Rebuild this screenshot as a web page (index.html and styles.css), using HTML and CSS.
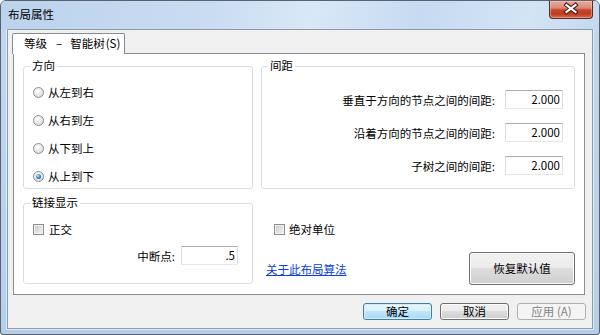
FILE: index.html
```html
<!DOCTYPE html>
<html lang="zh-CN">
<head>
<meta charset="utf-8">
<title>布局属性</title>
<link rel="stylesheet" href="styles.css">
</head>
<body>
<div class="window">
  <div class="titlebar">
    <span class="title">布局属性</span>
    <div class="close">
      <svg width="44" height="18" viewBox="0 0 44 18">
        <path d="M18.5 5 L27.5 12 M27.5 5 L18.5 12" stroke="#4a1d15" stroke-width="4.2" stroke-linecap="square" fill="none"/>
        <path d="M18.5 5 L27.5 12 M27.5 5 L18.5 12" stroke="#ffffff" stroke-width="2.2" stroke-linecap="square" fill="none"/>
      </svg>
    </div>
  </div>
  <div class="client">
    <div class="tabstrip">
      <div class="tab">等级<span class="dash">–</span>智能树<span class="acc">(S)</span></div>
    </div>
    <div class="panel">
      <div class="row">
        <div class="group g1">
          <span class="legend">方向</span>
          <div class="opt"><span class="radio"></span><span>从左到右</span></div>
          <div class="opt"><span class="radio"></span><span>从右到左</span></div>
          <div class="opt"><span class="radio"></span><span>从下到上</span></div>
          <div class="opt"><span class="radio on"></span><span>从上到下</span></div>
        </div>
        <div class="group g2">
          <span class="legend">间距</span>
          <div class="field"><span class="lbl">垂直于方向的节点之间的间距:</span><span class="input">2.000</span></div>
          <div class="field"><span class="lbl">沿着方向的节点之间的间距:</span><span class="input">2.000</span></div>
          <div class="field"><span class="lbl">子树之间的间距:</span><span class="input">2.000</span></div>
        </div>
      </div>
      <div class="row">
        <div class="group g3">
          <span class="legend">链接显示</span>
          <div class="check-row"><span class="checkbox"></span><span>正交</span></div>
          <div class="field mid"><span class="lbl small">中断点:</span><span class="input small">.5</span></div>
        </div>
        <div class="extra">
          <div class="check-row abs"><span class="checkbox"></span><span>绝对单位</span></div>
          <div class="bottom-row">
            <a class="link" href="#">关于此布局算法</a>
            <div class="btn big">恢复默认值</div>
          </div>
        </div>
      </div>
    </div>
    <div class="buttons">
      <div class="btn default">确定</div>
      <div class="btn">取消</div>
      <div class="btn disabled">应用 (A)</div>
    </div>
  </div>
</div>
</body>
</html>
```
FILE: styles.css
```css
* { box-sizing: border-box; }

body {
  margin: 0;
  background: #ffffff;
  font-family: "Noto Sans CJK SC", "Noto Sans", sans-serif;
  font-size: 11.5px;
  line-height: 16px;
  color: #000000;
}

.window {
  width: 600px;
  height: 335px;
  border: 1px solid #58636f;
  border-radius: 6px 6px 3px 3px;
  background: linear-gradient(180deg, #c3d8ef 0%, #bcd3ed 60%, #b4cdea 100%);
  display: flex;
  flex-direction: column;
  overflow: hidden;
}

.titlebar {
  height: 28px;
  position: relative;
  display: flex;
  align-items: center;
  padding: 0 0 2px 7px;
  background: linear-gradient(100deg, #bcd3ed 0%, #c9dcf2 35%, #d9e8f8 52%, #c6daf1 70%, #d3e4f6 88%, #c4d8ef 100%);
}

.title {
  font-size: 11.5px;
  color: #000;
}

.close {
  position: absolute;
  top: 0;
  right: 6px;
  width: 44px;
  height: 18px;
  border: 1px solid #5a2a22;
  border-top: none;
  border-radius: 0 0 4px 4px;
  background: linear-gradient(180deg, #e8ab9d 0%, #dc8a78 40%, #c6482f 52%, #bf3b22 75%, #d86a52 100%);
  box-shadow: inset 0 0 0 1px rgba(255, 210, 200, 0.45);
  display: flex;
  align-items: center;
  justify-content: center;
}

.close svg {
  display: block;
  margin: -1px 0 0 -2px;
}

.client {
  margin: 0 6px;
  height: 300px;
  border: 1px solid #8e9aa7;
  background: #f0f0f0;
  box-shadow: 0 0 0 1px rgba(255, 255, 255, 0.55);
  display: flex;
  flex-direction: column;
}

.tabstrip {
  display: flex;
  padding: 3px 0 0 4px;
}

.tab {
  width: 113px;
  height: 21px;
  border: 1px solid #898c95;
  border-bottom: none;
  border-radius: 2px 2px 0 0;
  background: #ffffff;
  position: relative;
  z-index: 1;
  padding-left: 11px;
  line-height: 19px;
  white-space: nowrap;
}

.dash {
  margin: 0 8px 0 9px;
}

.acc {
  margin-left: 1px;
}

.panel {
  margin: -1px 7px 0 5px;
  height: 242px;
  border: 1px solid #898c95;
  background: #ffffff;
  padding: 12px 9px 10px 9px;
  display: flex;
  flex-direction: column;
  gap: 14px;
}

.row {
  display: flex;
  gap: 8px;
}

.group {
  position: relative;
  border: 1px solid #d5dfe5;
  border-radius: 3px;
}

.legend {
  position: absolute;
  top: -10px;
  left: 6px;
  padding: 0 2px;
  background: #ffffff;
  line-height: 16px;
  white-space: nowrap;
}

.g1 {
  width: 230px;
  height: 123px;
  padding: 11px 0 0 9px;
}

.opt {
  height: 28px;
  display: flex;
  align-items: center;
  gap: 4px;
}

.radio {
  width: 11px;
  height: 11px;
  border-radius: 50%;
  border: 1px solid #8c8e90;
  background: radial-gradient(circle at 40% 35%, #ffffff 0%, #e6e6e6 55%, #cdcdcd 100%);
  position: relative;
  flex: none;
}

.radio.on::after {
  content: "";
  position: absolute;
  left: 2px;
  top: 2px;
  width: 5px;
  height: 5px;
  border-radius: 50%;
  background: radial-gradient(circle at 40% 35%, #b9e2fb 0%, #3b8fd0 50%, #0d3f74 100%);
}

.g2 {
  width: 314px;
  height: 123px;
  padding: 23px 11px 0 0;
  display: flex;
  flex-direction: column;
  gap: 14px;
}

.field {
  display: flex;
  justify-content: flex-end;
  align-items: center;
  height: 19px;
}

.lbl {
  margin-right: 10px;
  white-space: nowrap;
}

.lbl.small {
  margin-right: 6px;
}

.input {
  width: 58px;
  height: 19px;
  border: 1px solid #dbdfe6;
  border-top-color: #abadb3;
  border-bottom-color: #e3e9ef;
  background: #ffffff;
  text-align: right;
  padding-right: 2px;
  line-height: 17px;
}

.input.small {
  width: 57px;
}

.g3 {
  width: 230px;
  height: 81px;
  padding: 19px 14px 0 9px;
}

.check-row {
  height: 12px;
  display: flex;
  align-items: center;
  gap: 5px;
}

.checkbox {
  width: 11px;
  height: 11px;
  border: 1px solid #8e8f8f;
  background: linear-gradient(135deg, #c3c6ca 0%, #dcdee0 45%, #f4f4f4 100%);
  box-shadow: inset 0 0 0 1px #f2f2f2;
  flex: none;
}

.field.mid {
  margin-top: 11px;
}

.extra {
  width: 314px;
  height: 81px;
  padding-top: 20px;
}

.check-row.abs {
  padding-left: 13px;
  gap: 4px;
}

.bottom-row {
  margin-top: 17px;
  padding-left: 5px;
  display: flex;
  justify-content: space-between;
  align-items: center;
}

.link {
  color: #0a3ce8;
  text-decoration: underline;
}

.btn {
  width: 69px;
  height: 17px;
  border: 1px solid #707070;
  border-radius: 3px;
  background: linear-gradient(180deg, #f2f2f2 0%, #ebebeb 50%, #dddddd 50%, #cfcfcf 100%);
  box-shadow: inset 0 0 0 1px #fbfbfb;
  display: flex;
  align-items: center;
  justify-content: center;
  line-height: 15px;
  white-space: nowrap;
}

.btn.big {
  width: 106px;
  height: 33px;
  font-size: 11.5px;
}

.btn.default {
  border-color: #3c7fb1;
  background: linear-gradient(180deg, #eaf6fd 0%, #d9f0fc 50%, #bee6fd 50%, #a7d9f5 100%);
  box-shadow: inset 0 0 0 1px #d5ecfb;
}

.btn.disabled {
  border-color: #adb2b5;
  background: #f4f4f4;
  box-shadow: none;
  color: #838383;
}

.buttons {
  display: flex;
  justify-content: flex-end;
  gap: 8px;
  padding-right: 6px;
  margin-top: 8px;
}
```
